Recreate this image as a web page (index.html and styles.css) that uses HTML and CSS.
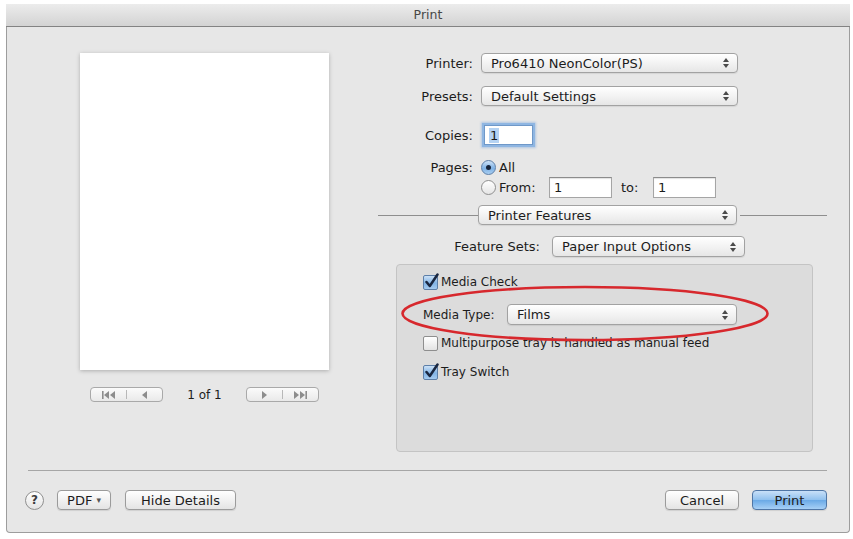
FILE: index.html
```html
<!DOCTYPE html>
<html lang="en">
<head>
  <meta charset="UTF-8" />
  <meta name="viewport" content="width=device-width, initial-scale=1" />
  <title>Print</title>
  <link rel="stylesheet" href="styles.css">
</head>
<body>

  <div class="window">
    <!-- Barra de título -->
    <div class="titlebar">Print</div>

    <div class="main">
      <!-- Pré-visualização -->
      <div class="preview-col">
        <div class="page"></div>
        <div class="pager">
          <div class="seg">
            <span class="seg-btn">
              <svg width="14" height="8" viewBox="0 0 14 8"><rect x="0" y="0" width="1.6" height="8" fill="#8d8d8d"/><polygon points="7,0 7,8 2,4" fill="#8d8d8d"/><polygon points="13,0 13,8 8,4" fill="#8d8d8d"/></svg>
            </span>
            <span class="seg-sep"></span>
            <span class="seg-btn">
              <svg width="7" height="8" viewBox="0 0 7 8"><polygon points="6,0 6,8 1,4" fill="#8d8d8d"/></svg>
            </span>
          </div>
          <span class="page-count">1 of 1</span>
          <div class="seg">
            <span class="seg-btn">
              <svg width="7" height="8" viewBox="0 0 7 8"><polygon points="1,0 1,8 6,4" fill="#8d8d8d"/></svg>
            </span>
            <span class="seg-sep"></span>
            <span class="seg-btn">
              <svg width="14" height="8" viewBox="0 0 14 8"><polygon points="1,0 1,8 6,4" fill="#8d8d8d"/><polygon points="7,0 7,8 12,4" fill="#8d8d8d"/><rect x="12.4" y="0" width="1.6" height="8" fill="#8d8d8d"/></svg>
            </span>
          </div>
        </div>
      </div>

      <!-- Opções -->
      <div class="settings">
        <div class="row row-printer">
          <span class="lbl">Printer:</span>
          <div class="popup w-main">Pro6410 NeonColor(PS)
            <svg class="arrows" width="6" height="10" viewBox="0 0 6 10"><polygon points="0,4 3,0 6,4" /><polygon points="0,6 3,10 6,6" /></svg>
          </div>
        </div>

        <div class="row row-presets">
          <span class="lbl">Presets:</span>
          <div class="popup w-main">Default Settings
            <svg class="arrows" width="6" height="10" viewBox="0 0 6 10"><polygon points="0,4 3,0 6,4" /><polygon points="0,6 3,10 6,6" /></svg>
          </div>
        </div>

        <div class="row row-copies">
          <span class="lbl">Copies:</span>
          <span class="field field-copies focus"><span class="sel">1</span></span>
        </div>

        <div class="row row-pages">
          <span class="lbl">Pages:</span>
          <span class="radio on"></span>
          <span class="opt">All</span>
        </div>

        <div class="row row-from">
          <span class="lbl"></span>
          <span class="radio"></span>
          <span class="opt">From:</span>
          <span class="field field-page">1</span>
          <span class="to">to:</span>
          <span class="field field-page">1</span>
        </div>

        <div class="row row-section">
          <span class="line line-left"></span>
          <div class="popup w-section">Printer Features
            <svg class="arrows" width="6" height="10" viewBox="0 0 6 10"><polygon points="0,4 3,0 6,4" /><polygon points="0,6 3,10 6,6" /></svg>
          </div>
          <span class="line line-right"></span>
        </div>

        <div class="row row-sets">
          <span class="lbl lbl-sets">Feature Sets:</span>
          <div class="popup w-sets">Paper Input Options
            <svg class="arrows" width="6" height="10" viewBox="0 0 6 10"><polygon points="0,4 3,0 6,4" /><polygon points="0,6 3,10 6,6" /></svg>
          </div>
        </div>

        <!-- Caixa de opções -->
        <div class="groupbox">
          <div class="check-row">
            <span class="checkbox on"><svg width="17" height="17" viewBox="0 0 17 17"><path d="M3.5 9 L6.8 13 L14.5 1.5" /></svg></span>
            <span>Media Check</span>
          </div>

          <div class="type-row">
            <span class="type-lbl">Media Type:</span>
            <div class="popup w-type">Films
              <svg class="arrows" width="6" height="10" viewBox="0 0 6 10"><polygon points="0,4 3,0 6,4" /><polygon points="0,6 3,10 6,6" /></svg>
            </div>
          </div>

          <div class="check-row check-multi">
            <span class="checkbox"></span>
            <span>Multipurpose tray is handled as manual feed</span>
          </div>

          <div class="check-row check-tray">
            <span class="checkbox on"><svg width="17" height="17" viewBox="0 0 17 17"><path d="M3.5 9 L6.8 13 L14.5 1.5" /></svg></span>
            <span>Tray Switch</span>
          </div>

          <!-- Marcação vermelha -->
          <svg class="mark" width="370" height="57" viewBox="0 0 370 57"><ellipse cx="185" cy="28.5" rx="182.5" ry="26.5" /></svg>
        </div>
      </div>
    </div>

    <div class="divider"></div>

    <!-- Rodapé -->
    <div class="footer">
      <span class="help">?</span>
      <span class="btn btn-pdf">PDF <span class="caret">&#9662;</span></span>
      <span class="btn btn-hide">Hide Details</span>
      <span class="spacer"></span>
      <span class="btn btn-cancel">Cancel</span>
      <span class="btn btn-print">Print</span>
    </div>
  </div>

</body>
</html>
```

FILE: styles.css
```css
body {
  margin: 0;
  background: #ffffff;
  font-family: "DejaVu Sans", "Liberation Sans", sans-serif;
  font-size: 13px;
  color: #1c1c1c;
}

.window {
  box-sizing: border-box;
  margin: 4px 0 0 6px;
  width: 844px;
  height: 529px;
  background: #e7e7e7;
  border: 1px solid #9d9d9d;
  border-top: none;
  border-radius: 0 0 4px 4px;
}

.titlebar {
  box-sizing: border-box;
  height: 23px;
  margin: 0 -1px;
  background: linear-gradient(#ececec, #d3d3d3);
  border-bottom: 1px solid #838383;
  text-align: center;
  line-height: 22px;
  font-size: 12.5px;
  color: #474747;
}

.main {
  display: flex;
  height: 443px;
}

/* pré-visualização */
.preview-col {
  width: 371px;
  padding: 26px 0 0 73px;
  box-sizing: border-box;
}

.page {
  width: 249px;
  height: 317px;
  background: #ffffff;
  box-shadow: 0 1px 4px rgba(0, 0, 0, 0.25);
}

.pager {
  width: 249px;
  margin-top: 17px;
  display: flex;
  align-items: center;
  justify-content: center;
  gap: 24px;
}

.seg {
  display: flex;
  flex-shrink: 0;
  align-items: center;
  width: 73px;
  height: 15px;
  box-sizing: border-box;
  border: 1px solid #a9a9a9;
  border-radius: 4px;
  background: linear-gradient(#fbfbfb, #e9e9e9);
}

.seg-btn {
  flex: 1;
  display: flex;
  justify-content: center;
}

.seg-sep {
  width: 1px;
  height: 9px;
  background: #b8b8b8;
}

.page-count {
  flex-shrink: 0;
  white-space: nowrap;
  font-size: 12px;
  text-align: center;
}

/* opções */
.settings {
  width: 449px;
  padding-top: 26px;
}

.row {
  display: flex;
  align-items: center;
}

.lbl {
  width: 95px;
  margin-right: 8px;
  text-align: right;
}

.popup {
  box-sizing: border-box;
  height: 20px;
  display: flex;
  align-items: center;
  justify-content: space-between;
  padding: 0 8px 0 9px;
  border: 1px solid #a2a2a2;
  border-radius: 4px;
  background: linear-gradient(#ffffff, #f3f3f3 50%, #e6e6e6);
  box-shadow: 0 1px 1px rgba(0, 0, 0, 0.08);
}

.arrows polygon {
  fill: #4a4a4a;
}

.w-main {
  width: 257px;
}

.row-presets {
  margin-top: 13px;
}

.row-copies {
  margin-top: 19px;
}

.field {
  box-sizing: border-box;
  height: 20px;
  display: inline-flex;
  align-items: center;
  padding-left: 4px;
  background: #ffffff;
  border: 1px solid #a5a5a5;
  border-top-color: #8c8c8c;
  box-shadow: inset 0 1px 1px rgba(0, 0, 0, 0.12);
}

.field-copies {
  width: 49px;
  margin-left: 3px;
}

.focus {
  border-color: #6f98c8;
  box-shadow: 0 0 0 2px #8fb6e2, 0 0 2px 3px rgba(110, 160, 220, 0.45);
}

.sel {
  background: #b5d3f3;
  padding: 0 1px;
}

.row-pages {
  margin-top: 15px;
}

.radio {
  box-sizing: border-box;
  width: 15px;
  height: 15px;
  border-radius: 50%;
  border: 1px solid #8f8f8f;
  background: linear-gradient(#ffffff, #e5e5e5);
  display: flex;
  align-items: center;
  justify-content: center;
}

.radio.on {
  border-color: #5d7fa8;
  background: linear-gradient(#cfe3f7, #7fb2e5 55%, #a8cdf0);
}

.radio.on::after {
  content: "";
  width: 5px;
  height: 5px;
  border-radius: 50%;
  background: #17243a;
}

.opt {
  margin-left: 3px;
}

.row-from {
  margin-top: 2px;
}

.row-from .opt {
  width: 50px;
}

.field-page {
  width: 63px;
  height: 21px;
}

.to {
  width: 32px;
  margin-left: 9px;
}

.row-section {
  margin-top: 7px;
}

.line {
  height: 1px;
  background: #8e8e8e;
}

.line-left {
  width: 100px;
}

.line-right {
  width: 87px;
  margin-left: 3px;
}

.w-section {
  width: 259px;
}

.row-sets {
  margin-top: 11px;
}

.lbl-sets {
  width: 162px;
  margin-right: 12px;
}

.w-sets {
  width: 193px;
  height: 21px;
}

/* caixa de grupo */
.groupbox {
  position: relative;
  box-sizing: border-box;
  margin: 7px 0 0 18px;
  width: 417px;
  height: 188px;
  padding: 9px 0 0 26px;
  background: #dcdcdc;
  border: 1px solid #c4c4c4;
  border-radius: 4px;
  font-size: 12px;
}

.check-row {
  display: flex;
  align-items: center;
  height: 16px;
  gap: 3px;
}

.checkbox {
  box-sizing: border-box;
  position: relative;
  width: 15px;
  height: 15px;
  border: 1px solid #8e8e8e;
  border-radius: 2px;
  background: linear-gradient(#ffffff, #e3e3e3);
}

.checkbox.on {
  border-color: #5d7fa8;
  background: linear-gradient(#cde2f7, #82b4e6 55%, #a5cbf0);
}

.checkbox svg {
  position: absolute;
  left: -1px;
  top: -3px;
}

.checkbox path {
  fill: none;
  stroke: #1a2740;
  stroke-width: 2.5;
  stroke-linecap: round;
  stroke-linejoin: round;
}

.type-row {
  display: flex;
  align-items: center;
  margin-top: 14px;
}

.type-lbl {
  width: 84px;
}

.w-type {
  width: 230px;
  height: 21px;
  font-size: 13px;
}

.check-multi {
  margin-top: 10px;
}

.check-tray {
  margin-top: 13px;
}

.mark {
  position: absolute;
  left: 3px;
  top: 20px;
  overflow: visible;
}

.mark ellipse {
  fill: none;
  stroke: #d7282d;
  stroke-width: 2.6;
}

/* rodapé */
.divider {
  height: 1px;
  margin: 0 22px 0 21px;
  background: #a6a6a6;
}

.footer {
  display: flex;
  align-items: center;
  padding: 19px 22px 0 18px;
}

.help {
  box-sizing: border-box;
  width: 19px;
  height: 19px;
  border-radius: 50%;
  border: 1px solid #8f8f8f;
  background: linear-gradient(#ffffff, #e4e4e4);
  display: flex;
  align-items: center;
  justify-content: center;
  font-size: 12px;
  font-weight: bold;
  color: #3c3c3c;
  margin-right: 13px;
}

.btn {
  box-sizing: border-box;
  height: 20px;
  display: flex;
  align-items: center;
  justify-content: center;
  border: 1px solid #9b9b9b;
  border-radius: 4px;
  background: linear-gradient(#ffffff, #f1f1f1 50%, #e4e4e4);
  box-shadow: 0 1px 1px rgba(0, 0, 0, 0.1);
}

.btn-pdf {
  width: 54px;
  margin-right: 14px;
}

.caret {
  font-size: 9px;
  color: #555;
  margin-left: 4px;
}

.btn-hide {
  width: 111px;
}

.spacer {
  flex: 1;
}

.btn-cancel {
  width: 74px;
  margin-right: 13px;
}

.btn-print {
  width: 75px;
  border-color: #4f76a6;
  background: linear-gradient(#c8e0f8, #8fc0ee 50%, #6aa9e6 51%, #a7d0f6);
}
```
